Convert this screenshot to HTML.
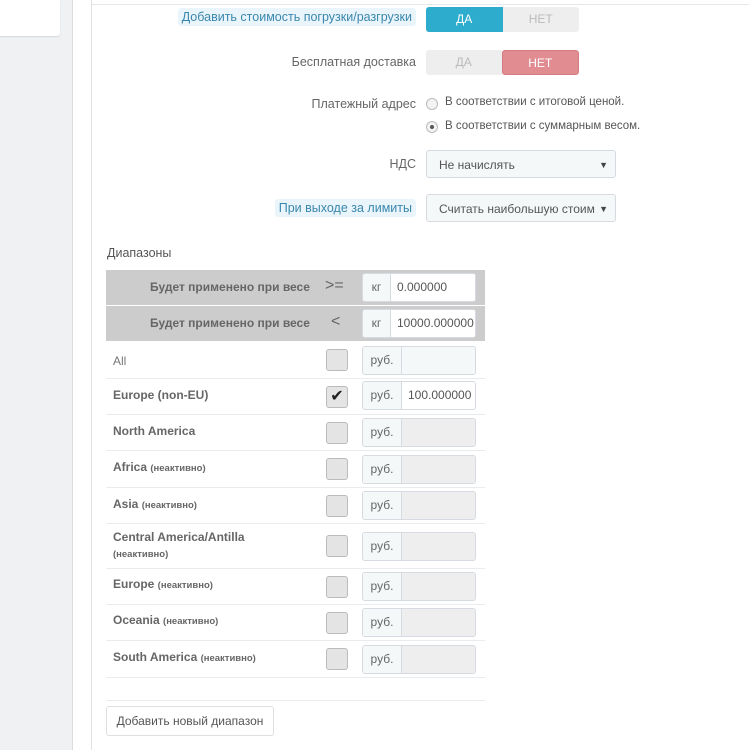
<!DOCTYPE html>
<html><head><meta charset="utf-8"><style>
body{margin:0;width:749px;height:750px;position:relative;overflow:hidden;background:#fff;font-family:"Liberation Sans","DejaVu Sans",sans-serif;font-size:12px;color:#555}
.a{position:absolute}
.lbl{position:absolute;right:333px;text-align:right;font-size:12.5px;color:#666;white-space:nowrap}
.hint{background:#eaf5fb;color:#3a87ad;padding:2px 4px;border-radius:3px}
.tg{position:absolute;left:426px;width:153px;height:25px;display:flex;border-radius:3px;overflow:hidden;font-size:12px}
.tg div{flex:1;text-align:center;line-height:25px}
.sel{position:absolute;left:426px;width:190px;height:28px;border:1px solid #d5dbe0;border-radius:3px;background:#f5f8f9;line-height:28px;padding-left:12px;box-sizing:border-box;color:#555}
.sel:after{content:"▼";position:absolute;right:7px;top:0;font-size:9px;color:#444}
.row{position:absolute;left:106px;width:379px;border-bottom:1px solid #e8ecee}
.nm{position:absolute;left:7px;font-weight:bold;color:#666;font-size:12px}
.nm small{font-size:9.5px}
.cb{position:absolute;left:220px;width:20px;height:20px;border:1px solid #bbb;border-radius:3px;background:#e4e4e4}
.ig{position:absolute;left:256px;width:114px;height:29px;border:1px solid #d5dbe0;border-radius:3px;display:flex;box-sizing:border-box;overflow:hidden}
.ig .ad{width:38px;background:#f5f8f9;border-right:1px solid #d5dbe0;text-align:center;line-height:27px;color:#666}
.ig .f{flex:1;background:#eee;line-height:27px;padding-left:6px;white-space:nowrap;overflow:hidden;color:#555}
</style></head><body>
<div class="a" style="left:0;top:0;width:72px;height:750px;background:#eff1f2;border-right:1px solid #dadde0"></div>
<div class="a" style="left:0;top:0;width:60px;height:36px;background:#fff;border-radius:0 0 3px 0;box-shadow:0 1px 1px #d5d8db"></div>
<div class="a" style="left:91px;top:0;width:1px;height:750px;background:#dfe2e4"></div>
<div class="a" style="left:92px;top:4px;width:657px;height:1px;background:#e5e7e9"></div>

<div class="lbl" style="top:10px"><span class="hint">Добавить стоимость погрузки/разгрузки</span></div>
<div class="tg" style="top:7px"><div style="background:#2eacce;color:#fff">ДА</div><div style="background:#eee;color:#bbb">НЕТ</div></div>
<div class="lbl" style="top:55px">Бесплатная доставка</div>
<div class="tg" style="top:50px"><div style="background:#eee;color:#bbb">ДА</div><div style="background:#e08c91;color:#fff;border:1px solid #d37d83;border-radius:3px">НЕТ</div></div>
<div class="lbl" style="top:97px">Платежный адрес</div>
<div class="a" style="left:426px;top:98px;width:10px;height:10px;border:1px solid #bbb;border-radius:50%;background:#f3f3f3"></div>
<div class="a" style="left:445px;top:96px;font-size:11.5px">В соответствии с итоговой ценой.</div>
<div class="a" style="left:426px;top:121px;width:10px;height:10px;border:1px solid #bbb;border-radius:50%;background:#f3f3f3"><div class="a" style="left:3px;top:3px;width:4px;height:4px;border-radius:50%;background:#555"></div></div>
<div class="a" style="left:445px;top:120px;font-size:11.5px">В соответствии с суммарным весом.</div>
<div class="lbl" style="top:157px">НДС</div>
<div class="sel" style="top:150px">Не начислять</div>
<div class="lbl" style="top:201px"><span class="hint">При выходе за лимиты</span></div>
<div class="sel" style="top:194px">Считать наибольшую стоим</div>

<div class="a" style="left:107px;top:246px;font-size:12.5px;color:#555">Диапазоны</div>

<div class="a" style="left:106px;top:270px;width:379px;height:35px;background:#ccc"></div>
<div class="a" style="left:106px;top:306px;width:379px;height:35px;background:#ccc"></div>
<div class="a" style="left:150px;top:280px;font-weight:bold;color:#666">Будет применено при весе</div>
<div class="a" style="left:150px;top:316px;font-weight:bold;color:#666">Будет применено при весе</div>
<div class="a" style="left:325px;top:277px;font-size:16px;color:#666">&gt;=</div>
<div class="a" style="left:331px;top:313px;font-size:16px;color:#666">&lt;</div>
<div class="ig" style="left:362px;top:273px;background:#fff"><div class="ad" style="width:27px">кг</div><div class="f" style="background:#fff">0.000000</div></div>
<div class="ig" style="left:362px;top:309px;background:#fff"><div class="ad" style="width:27px">кг</div><div class="f" style="background:#fff">10000.000000</div></div>

<div class="row" style="top:342px;height:36px"><div class="nm" style="top:12px;font-weight:normal;color:#777">All</div><div class="cb" style="top:7px"></div><div class="ig" style="top:4px"><div class="ad">руб.</div><div class="f" style="background:#f5f8f9"></div></div></div>
<div class="row" style="top:378px;height:36px"><div class="nm" style="top:10px">Europe (non-EU)</div><div class="cb" style="top:8px;font-size:16px;line-height:20px;text-align:center;color:#222">✔</div><div class="ig" style="top:3px"><div class="ad">руб.</div><div class="f" style="background:#fff">100.000000</div></div></div>
<div class="row" style="top:414px;height:36px"><div class="nm" style="top:10px">North America</div><div class="cb" style="top:8px"></div><div class="ig" style="top:4px"><div class="ad">руб.</div><div class="f"></div></div></div>
<div class="row" style="top:450px;height:37px"><div class="nm" style="top:10px">Africa <small>(неактивно)</small></div><div class="cb" style="top:8px"></div><div class="ig" style="top:5px"><div class="ad">руб.</div><div class="f"></div></div></div>
<div class="row" style="top:487px;height:36px"><div class="nm" style="top:10px">Asia <small>(неактивно)</small></div><div class="cb" style="top:8px"></div><div class="ig" style="top:4px"><div class="ad">руб.</div><div class="f"></div></div></div>
<div class="row" style="top:523px;height:45px"><div class="nm" style="top:6px;line-height:16px">Central America/Antilla<br><small>(неактивно)</small></div><div class="cb" style="top:12px"></div><div class="ig" style="top:9px"><div class="ad">руб.</div><div class="f"></div></div></div>
<div class="row" style="top:568px;height:36px"><div class="nm" style="top:9px">Europe <small>(неактивно)</small></div><div class="cb" style="top:8px"></div><div class="ig" style="top:4px"><div class="ad">руб.</div><div class="f"></div></div></div>
<div class="row" style="top:604px;height:36px"><div class="nm" style="top:9px">Oceania <small>(неактивно)</small></div><div class="cb" style="top:8px"></div><div class="ig" style="top:4px"><div class="ad">руб.</div><div class="f"></div></div></div>
<div class="row" style="top:640px;height:37px"><div class="nm" style="top:10px">South America <small>(неактивно)</small></div><div class="cb" style="top:8px"></div><div class="ig" style="top:5px"><div class="ad">руб.</div><div class="f"></div></div></div>

<div class="a" style="left:106px;top:700px;width:379px;height:1px;background:#e8ecee"></div>
<div class="a" style="left:106px;top:706px;width:166px;height:28px;border:1px solid #dde1e4;border-radius:3px;line-height:28px;text-align:center;color:#555;font-size:12px">Добавить новый диапазон</div>
</body></html>
